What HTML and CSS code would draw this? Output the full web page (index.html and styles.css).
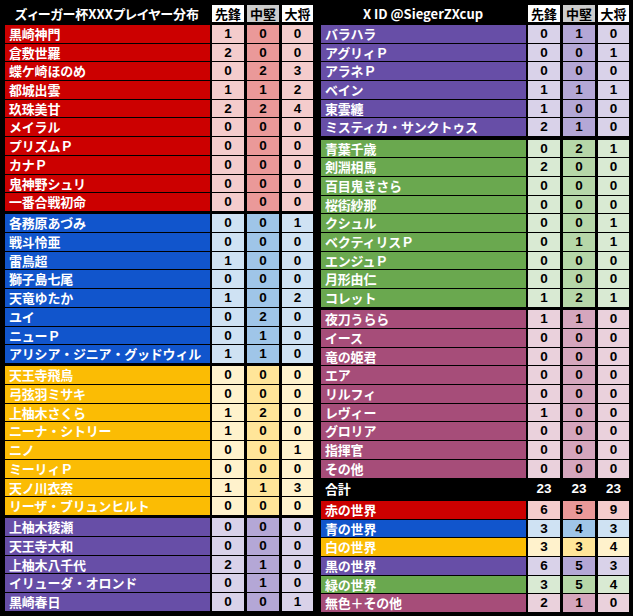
FILE: index.html
```html
<!DOCTYPE html>
<html lang="ja">
<head>
<meta charset="utf-8">
<link rel="stylesheet" href="styles.css">
</head>
<body>
<div class="sheet">
  <section class="panel">
    <div class="row head"><div class="title">ズィーガー杯XXXプレイヤー分布</div><div class="h">先鋒</div><div class="h mid">中堅</div><div class="h">大将</div></div>
    <div class="group red">
      <div class="row"><div class="name">黒崎神門</div><div class="n">1</div><div class="n m">0</div><div class="n">0</div></div>
      <div class="row"><div class="name">倉敷世羅</div><div class="n">2</div><div class="n m">0</div><div class="n">0</div></div>
      <div class="row"><div class="name">蝶ケ崎ほのめ</div><div class="n">0</div><div class="n m">2</div><div class="n">3</div></div>
      <div class="row"><div class="name">都城出雲</div><div class="n">1</div><div class="n m">1</div><div class="n">2</div></div>
      <div class="row"><div class="name">玖珠美甘</div><div class="n">2</div><div class="n m">2</div><div class="n">4</div></div>
      <div class="row"><div class="name">メイラル</div><div class="n">0</div><div class="n m">0</div><div class="n">0</div></div>
      <div class="row"><div class="name">プリズムＰ</div><div class="n">0</div><div class="n m">0</div><div class="n">0</div></div>
      <div class="row"><div class="name">カナＰ</div><div class="n">0</div><div class="n m">0</div><div class="n">0</div></div>
      <div class="row"><div class="name">鬼神野シュリ</div><div class="n">0</div><div class="n m">0</div><div class="n">0</div></div>
      <div class="row"><div class="name">一番合戦初命</div><div class="n">0</div><div class="n m">0</div><div class="n">0</div></div>
    </div>
    <div class="group blue">
      <div class="row"><div class="name">各務原あづみ</div><div class="n">0</div><div class="n m">0</div><div class="n">1</div></div>
      <div class="row"><div class="name">戦斗怜亜</div><div class="n">0</div><div class="n m">0</div><div class="n">0</div></div>
      <div class="row"><div class="name">雷鳥超</div><div class="n">1</div><div class="n m">0</div><div class="n">0</div></div>
      <div class="row"><div class="name">獅子島七尾</div><div class="n">0</div><div class="n m">0</div><div class="n">0</div></div>
      <div class="row"><div class="name">天竜ゆたか</div><div class="n">1</div><div class="n m">0</div><div class="n">2</div></div>
      <div class="row"><div class="name">ユイ</div><div class="n">0</div><div class="n m">2</div><div class="n">0</div></div>
      <div class="row"><div class="name">ニューＰ</div><div class="n">0</div><div class="n m">1</div><div class="n">0</div></div>
      <div class="row"><div class="name">アリシア・ジニア・グッドウィル</div><div class="n">1</div><div class="n m">1</div><div class="n">0</div></div>
    </div>
    <div class="group yellow">
      <div class="row"><div class="name">天王寺飛鳥</div><div class="n">0</div><div class="n m">0</div><div class="n">0</div></div>
      <div class="row"><div class="name">弓弦羽ミサキ</div><div class="n">0</div><div class="n m">0</div><div class="n">0</div></div>
      <div class="row"><div class="name">上柚木さくら</div><div class="n">1</div><div class="n m">2</div><div class="n">0</div></div>
      <div class="row"><div class="name">ニーナ・シトリー</div><div class="n">1</div><div class="n m">0</div><div class="n">0</div></div>
      <div class="row"><div class="name">ニノ</div><div class="n">0</div><div class="n m">0</div><div class="n">1</div></div>
      <div class="row"><div class="name">ミーリィＰ</div><div class="n">0</div><div class="n m">0</div><div class="n">0</div></div>
      <div class="row"><div class="name">天ノ川衣奈</div><div class="n">1</div><div class="n m">1</div><div class="n">3</div></div>
      <div class="row"><div class="name">リーザ・ブリュンヒルト</div><div class="n">0</div><div class="n m">0</div><div class="n">0</div></div>
    </div>
    <div class="group purple">
      <div class="row"><div class="name">上柚木稜瀬</div><div class="n">0</div><div class="n m">0</div><div class="n">0</div></div>
      <div class="row"><div class="name">天王寺大和</div><div class="n">0</div><div class="n m">0</div><div class="n">0</div></div>
      <div class="row"><div class="name">上柚木八千代</div><div class="n">2</div><div class="n m">1</div><div class="n">0</div></div>
      <div class="row"><div class="name">イリューダ・オロンド</div><div class="n">0</div><div class="n m">1</div><div class="n">0</div></div>
      <div class="row"><div class="name">黒崎春日</div><div class="n">0</div><div class="n m">0</div><div class="n">1</div></div>
    </div>
  </section>
  <section class="panel">
    <div class="row head"><div class="title">X ID @SiegerZXcup</div><div class="h">先鋒</div><div class="h mid">中堅</div><div class="h">大将</div></div>
    <div class="group purple">
      <div class="row"><div class="name">バラハラ</div><div class="n">0</div><div class="n m">1</div><div class="n">0</div></div>
      <div class="row"><div class="name">アグリィＰ</div><div class="n">0</div><div class="n m">0</div><div class="n">1</div></div>
      <div class="row"><div class="name">アラネＰ</div><div class="n">0</div><div class="n m">0</div><div class="n">0</div></div>
      <div class="row"><div class="name">ベイン</div><div class="n">1</div><div class="n m">1</div><div class="n">1</div></div>
      <div class="row"><div class="name">東雲纏</div><div class="n">1</div><div class="n m">0</div><div class="n">0</div></div>
      <div class="row"><div class="name">ミスティカ・サンクトゥス</div><div class="n">2</div><div class="n m">1</div><div class="n">0</div></div>
    </div>
    <div class="group green">
      <div class="row"><div class="name">青葉千歳</div><div class="n">0</div><div class="n m">2</div><div class="n">1</div></div>
      <div class="row"><div class="name">剣淵相馬</div><div class="n">2</div><div class="n m">0</div><div class="n">0</div></div>
      <div class="row"><div class="name">百目鬼きさら</div><div class="n">0</div><div class="n m">0</div><div class="n">0</div></div>
      <div class="row"><div class="name">桜街紗那</div><div class="n">0</div><div class="n m">0</div><div class="n">0</div></div>
      <div class="row"><div class="name">クシュル</div><div class="n">0</div><div class="n m">0</div><div class="n">1</div></div>
      <div class="row"><div class="name">ベクティリスＰ</div><div class="n">0</div><div class="n m">1</div><div class="n">1</div></div>
      <div class="row"><div class="name">エンジュＰ</div><div class="n">0</div><div class="n m">0</div><div class="n">0</div></div>
      <div class="row"><div class="name">月形由仁</div><div class="n">0</div><div class="n m">0</div><div class="n">0</div></div>
      <div class="row"><div class="name">コレット</div><div class="n">1</div><div class="n m">2</div><div class="n">1</div></div>
    </div>
    <div class="group maroon">
      <div class="row"><div class="name">夜刀うらら</div><div class="n">1</div><div class="n m">1</div><div class="n">0</div></div>
      <div class="row"><div class="name">イース</div><div class="n">0</div><div class="n m">0</div><div class="n">0</div></div>
      <div class="row"><div class="name">竜の姫君</div><div class="n">0</div><div class="n m">0</div><div class="n">0</div></div>
      <div class="row"><div class="name">エア</div><div class="n">0</div><div class="n m">0</div><div class="n">0</div></div>
      <div class="row"><div class="name">リルフィ</div><div class="n">0</div><div class="n m">0</div><div class="n">0</div></div>
      <div class="row"><div class="name">レヴィー</div><div class="n">1</div><div class="n m">0</div><div class="n">0</div></div>
      <div class="row"><div class="name">グロリア</div><div class="n">0</div><div class="n m">0</div><div class="n">0</div></div>
      <div class="row"><div class="name">指揮官</div><div class="n">0</div><div class="n m">0</div><div class="n">0</div></div>
      <div class="row"><div class="name">その他</div><div class="n">0</div><div class="n m">0</div><div class="n">0</div></div>
    </div>
    <div class="row total"><div class="name">合計</div><div class="n">23</div><div class="n">23</div><div class="n">23</div></div>
    <div class="group worlds">
      <div class="row red"><div class="name">赤の世界</div><div class="n">6</div><div class="n m">5</div><div class="n">9</div></div>
      <div class="row blue"><div class="name">青の世界</div><div class="n">3</div><div class="n m">4</div><div class="n">3</div></div>
      <div class="row yellow"><div class="name">白の世界</div><div class="n">3</div><div class="n m">3</div><div class="n">4</div></div>
      <div class="row purple"><div class="name">黒の世界</div><div class="n">6</div><div class="n m">5</div><div class="n">3</div></div>
      <div class="row green"><div class="name">緑の世界</div><div class="n">3</div><div class="n m">5</div><div class="n">4</div></div>
      <div class="row maroon"><div class="name">無色＋その他</div><div class="n">2</div><div class="n m">1</div><div class="n">0</div></div>
    </div>
  </section>
</div>
</body>
</html>
```

FILE: styles.css
```css
html, body {
  margin: 0;
  padding: 0;
  background: #000;
}

body {
  width: 633px;
  height: 616px;
  overflow: hidden;
  font-family: "Noto Sans CJK JP", "Liberation Sans", sans-serif;
  font-weight: 700;
  font-size: 13px;
}

.sheet {
  display: flex;
  gap: 8px;
  padding: 5px 0 0 5px;
}

.panel {
  width: 308px;
  display: flex;
  flex-direction: column;
}

.row {
  display: grid;
  grid-template-columns: 1fr 32px 32px 31px;
  column-gap: 3px;
  height: 17.7px;
  line-height: 17.7px;
}

.name {
  background: var(--c);
  color: #fff;
  padding-left: 4px;
  white-space: nowrap;
  overflow: hidden;
  margin-right: -1px;
  letter-spacing: -0.2px;
}

.n {
  background: var(--l);
  color: #000;
  text-align: center;
  font-family: "Liberation Sans", sans-serif;
  font-size: 13.5px;
}

.n.m {
  background: var(--d);
}

.head {
  height: 17px;
  line-height: 17px;
  margin-bottom: 3px;
}

.title {
  color: #fff;
  text-align: center;
  font-feature-settings: "palt";
}

.h {
  background: #fff;
  color: #000;
  text-align: center;
}

.h.mid {
  background: #cccccc;
}

.group {
  display: flex;
  flex-direction: column;
  gap: 1px;
  margin-bottom: 3.5px;
}

.total {
  height: 18px;
  line-height: 18px;
  margin-bottom: 3px;
  margin-top: -1px;
}

.total .name,
.total .n {
  background: transparent;
  color: #fff;
}

.red { --c: #cc0000; --l: #f4cccc; --d: #ea9999; }
.blue { --c: #1155cc; --l: #cfe2f3; --d: #9fc5e8; }
.yellow { --c: #fbbc04; --l: #fff2cc; --d: #ffe599; }
.purple { --c: #674ea7; --l: #d9d2e9; --d: #b4a7d6; }
.green { --c: #6aa84f; --l: #d9ead3; --d: #b6d7a8; }
.maroon { --c: #a64d79; --l: #ead1dc; --d: #d5a6bd; }
```
